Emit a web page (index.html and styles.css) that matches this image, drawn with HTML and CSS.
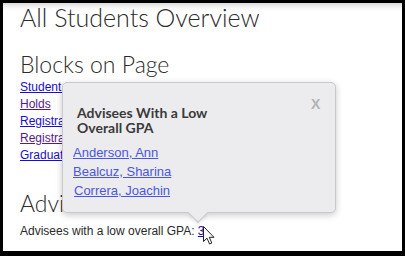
FILE: index.html
```html
<!DOCTYPE html>
<html>
<head>
<meta charset="utf-8">
<link rel="stylesheet" href="styles.css">
</head>
<body>
<div class="frame">
  <div class="page">
    <h1 class="title">All Students Overview</h1>
    <h2 class="section blocks">Blocks on Page</h2>
    <ul class="links">
      <li><a class="lnk" href="#">Student Information</a></li>
      <li><a class="lnk visited" href="#">Holds</a></li>
      <li><a class="lnk" href="#">Registration Summary</a></li>
      <li><a class="lnk visited" href="#">Registration Status</a></li>
      <li><a class="lnk" href="#">Graduation</a></li>
    </ul>
    <h2 class="section advisees">Advisees</h2>
    <p class="line">Advisees with a low overall GPA: <a class="lnk count" href="#">3</a></p>
  </div>
  <div class="popup">
    <div class="popup-title">Advisees With a Low<br>Overall GPA</div>
    <span class="close">X</span>
    <ul class="names">
      <li><a href="#">Anderson, Ann</a></li>
      <li><a href="#">Bealcuz, Sharina</a></li>
      <li class="last"><a href="#">Correra, Joachin</a></li>
    </ul>
    <span class="arrow"></span>
  </div>
  <svg class="cursor" width="13" height="19" viewBox="0 0 13 19">
    <path d="M0.5 0.5 L0.5 15.5 L4 12.2 L6.6 18 L8.8 17 L6.3 11.3 L11 11.3 Z" fill="#fff" stroke="#222" stroke-width="1" stroke-linejoin="round"/>
  </svg>
</div>
</body>
</html>
```
FILE: styles.css
```css
html, body {
  margin: 0;
  padding: 0;
}
.frame {
  position: relative;
  width: 405px;
  height: 256px;
  box-sizing: border-box;
  border-style: solid;
  border-color: #000;
  border-width: 3px 3px 5px 3px;
  overflow: hidden;
}
.page {
  height: 100%;
  box-sizing: border-box;
  padding-left: 17px;
  background: linear-gradient(to bottom, #d9d9d9 0, #f4f4f4 4px, #fff 8px);
  font-family: "Liberation Sans", Arial, sans-serif;
  font-size: 12px;
  color: #222;
}
.title {
  margin: 0;
  font-family: Lato, "Open Sans", sans-serif;
  font-weight: 300;
  font-size: 25px;
  line-height: 28px;
  color: #2b2b2b;
}
.section {
  margin: 20px 0 0;
  font-family: Lato, "Open Sans", sans-serif;
  font-weight: 300;
  font-size: 23px;
  line-height: 26px;
  color: #2b2b2b;
}
.section.advisees {
  margin-top: 26px;
}
.links {
  list-style: none;
  margin: 2px 0 0;
  padding: 0;
  line-height: 17px;
}
.lnk {
  color: #1a0dcc;
  text-decoration: underline;
}
.lnk.visited {
  color: #551a8b;
}
.line {
  margin: 7px 0 0;
  line-height: 17px;
  color: #2a2a2a;
}
.count {
  color: #1a0dab;
}
.popup {
  position: absolute;
  left: 59px;
  top: 79px;
  width: 274px;
  height: 131px;
  box-sizing: border-box;
  padding: 22px 10px 0;
  background: #ececef;
  border: 1px solid #c9c9cc;
  border-radius: 5px;
  box-shadow: 0 2px 7px rgba(0, 0, 0, 0.22);
}
.popup-title {
  margin-left: 4px;
  font-family: Lato, "Open Sans", sans-serif;
  font-weight: 700;
  font-size: 14px;
  line-height: 15px;
  color: #3a3a3a;
}
.close {
  position: absolute;
  left: 248px;
  top: 13px;
  font-family: "Liberation Sans", Arial, sans-serif;
  font-weight: 700;
  font-size: 14px;
  line-height: 16px;
  color: #b3b3b6;
}
.names {
  list-style: none;
  margin: 8px 0 0;
  padding: 0;
  font-family: "Liberation Sans", Arial, sans-serif;
  font-size: 13px;
  line-height: 19px;
}
.names a {
  color: #4a56e0;
  text-decoration: underline;
}
.names .last {
  padding-left: 1px;
}
.arrow {
  position: absolute;
  left: 128px;
  top: 123px;
  width: 13px;
  height: 13px;
  background: #ececef;
  border-right: 1px solid #c9c9cc;
  border-bottom: 1px solid #c9c9cc;
  transform: rotate(45deg);
  box-shadow: 2px 2px 3px rgba(0, 0, 0, 0.08);
}
.cursor {
  position: absolute;
  left: 200px;
  top: 223px;
}
```
